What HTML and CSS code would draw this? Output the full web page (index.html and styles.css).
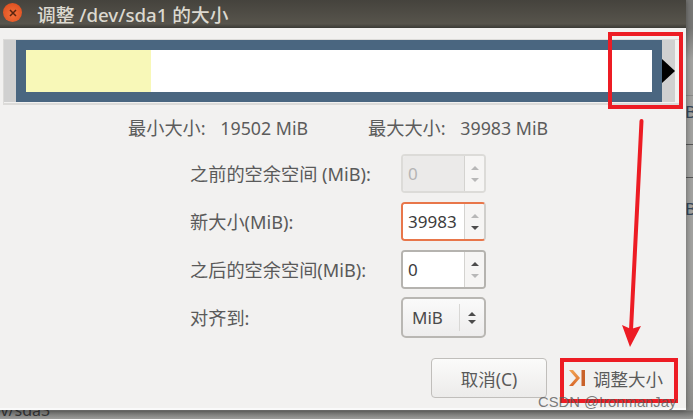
FILE: index.html
```html
<!DOCTYPE html>
<html lang="zh">
<head>
<meta charset="utf-8">
<title>调整 /dev/sda1 的大小</title>
<link rel="stylesheet" href="styles.css">
</head>
<body>
<div class="desktop">
  <div class="window">
    <header class="titlebar">
      <span class="close"><svg width="8" height="8" viewBox="0 0 8 8"><path d="M1 1l6 6M7 1l-6 6" stroke="#5a2410" stroke-width="1.5" fill="none"/></svg></span>
      <span class="title">调整 /dev/sda1 的大小</span>
    </header>
    <main class="content">
      <div class="graph">
        <div class="free-side"></div>
        <div class="partition"><div class="inner"><div class="used"></div></div></div>
        <div class="handle"><span class="tri"></span></div>
      </div>
      <div class="sizes">
        <span class="size">最小大小: <b class="num">19502 MiB</b></span>
        <span class="size">最大大小: <b class="num">39983 MiB</b></span>
      </div>
      <div class="form">
        <label>之前的空余空间 (MiB):</label>
        <div class="spin disabled"><span class="val">0</span><span class="btns"><i class="up"></i><i class="down"></i></span></div>
        <label>新大小(MiB):</label>
        <div class="spin focus"><span class="val">39983</span><span class="btns"><i class="up"></i><i class="down on"></i></span></div>
        <label>之后的空余空间(MiB):</label>
        <div class="spin"><span class="val">0</span><span class="btns"><i class="up on"></i><i class="down"></i></span></div>
        <label>对齐到:</label>
        <div class="combo"><span class="val">MiB</span><span class="arrows"><i class="up on"></i><i class="down on"></i></span></div>
      </div>
      <div class="actions">
        <button class="btn">取消(C)</button>
        <button class="btn primary"><svg width="17" height="18" viewBox="0 0 17 18"><defs><linearGradient id="g" x1="0" y1="0" x2="0" y2="1"><stop offset="0" stop-color="#f0a050"/><stop offset="1" stop-color="#d8682a"/></linearGradient></defs><path d="M0 1h4l7 8-7 8H0l7-8z" fill="url(#g)"/><rect x="12.5" y="1" width="3.5" height="16" fill="#c9622a"/></svg>调整大小</button>
      </div>
    </main>
  </div>
  <div class="behind behind-text">/dev/sda3</div>
  <div class="behind behind-b b1">B</div>
  <div class="behind behind-b b2">B</div>
  <div class="behind rule r1"></div>
  <div class="behind rule r2"></div>
  <div class="behind rule r3"></div>
  <div class="mark box-top"></div>
  <div class="mark box-bottom"></div>
  <svg class="arrow" width="693" height="419" viewBox="0 0 693 419"><path d="M641.5 121L631 330" stroke="#ed1c24" stroke-width="4" stroke-linecap="round" fill="none"/><path d="M622 325L631 329L641 326L630 347Z" fill="#ed1c24"/></svg>
  <div class="watermark">CSDN @IronmanJay</div>
</div>
</body>
</html>
```
FILE: styles.css
```css
* { box-sizing: border-box; }
html, body { margin: 0; padding: 0; }
body { width: 693px; height: 419px; overflow: hidden; background: #8f8f8b; font-family: "Noto Sans", "Noto Sans CJK SC", sans-serif; color: #555; }
.desktop { position: relative; isolation: isolate; width: 693px; height: 419px; background: linear-gradient(#777775 28px, #a2a2a0 60px, #a2a2a0 330px, #8e8e8c 410px, #6e6e6c 411px, #9a9a98); }
.window { width: 686px; height: 410px; display: flex; flex-direction: column; background: #f2f1f0; border-bottom: 2px solid #fafafa; box-shadow: 0 0 6px rgba(0,0,0,.4); }
.titlebar { height: 28px; flex: none; display: flex; align-items: center; padding-left: 3px; gap: 15px; background: linear-gradient(#45433d, #57544c 85%, #3b3a35); }
.close { width: 19px; height: 19px; margin-top: -3px; border-radius: 50%; background: radial-gradient(circle at 50% 60%, #f4703a, #d9481a); display: flex; align-items: center; justify-content: center; }
.title { font-size: 18.7px; font-weight: 500; color: #dcd9d0; margin-top: -2px; white-space: nowrap; }
.content { flex: 1; display: flex; flex-direction: column; padding: 11px 6px 0 3px; }
.graph { height: 66px; width: 677px; display: flex; border: 1px solid #dcdbd9; border-bottom-width: 2px; background: #f2f1f0; }
.free-side { width: 12px; height: 62px; background: #d0d0d0; }
.partition { width: 646px; height: 62px; padding: 10px; background: #4a6680; }
.inner { height: 42px; background: #fff; }
.used { width: 125px; height: 42px; background: #f8f8b8; }
.handle { width: 13px; height: 62px; background: #d0d0d0; display: flex; align-items: center; }
.tri { width: 0; height: 0; border-left: 13px solid #000; border-top: 12px solid transparent; border-bottom: 12px solid transparent; }
.sizes { display: flex; gap: 60px; margin: 12px 0 0 125px; font-size: 18.2px; line-height: 22px; color: #5c5c5c; white-space: nowrap; }
.size { width: 180px; }
.num { font-size: 17.8px; font-weight: 400; margin-left: 10px; }
.form { display: grid; grid-template-columns: 211px 85px; grid-auto-rows: 39px; row-gap: 9px; align-items: center; margin: 15px 0 0 187px; font-size: 18.2px; color: #5a5a5a; }
.form label { white-space: nowrap; margin-top: -1px; }
.spin { height: 39px; display: flex; border: 2px solid #b5b3af; border-radius: 4px; background: #fff; overflow: hidden; }
.spin .val { flex: 1; padding-left: 5px; line-height: 35px; font-size: 17px; color: #3c3c3c; background: #fff; }
.btns { width: 20px; flex: none; display: flex; flex-direction: column; align-items: center; justify-content: center; gap: 8px; background: #f6f5f4; border-left: 1px solid #d4d3d0; }
.spin.disabled { border-color: #dcdbd8; }
.spin.disabled .val { background: #ebeae9; color: #b5b5b5; }
.spin.focus { border-color: #e8764a; border-right-color: #d0cfcc; }
.up, .down { display: block; width: 0; height: 0; border-left: 4px solid transparent; border-right: 4px solid transparent; }
.up { border-bottom: 4px solid #b8b8b8; }
.down { border-top: 4px solid #b8b8b8; }
.up.on { border-bottom-color: #4c4c4c; }
.down.on { border-top-color: #4c4c4c; }
.combo { height: 41px; display: flex; align-items: center; border: 2px solid #b9b7b3; border-radius: 5px; background: linear-gradient(#fafafa, #eeeded); }
.combo .val { flex: 1; padding-left: 9px; font-size: 17px; color: #4a4a4a; height: 27px; line-height: 27px; border-right: 1px solid #d8d7d5; }
.arrows { width: 24px; flex: none; display: flex; flex-direction: column; align-items: center; gap: 4px; }
.actions { display: flex; gap: 13px; margin: 21px 0 0 428px; }
.btn { width: 116px; height: 40px; font: inherit; font-size: 17.5px; font-weight: 400; color: #5a5a5a; border: 1px solid #c0bebb; border-radius: 4px; background: linear-gradient(#fbfbfa, #ecebea); display: flex; align-items: center; justify-content: center; gap: 7px; padding: 0; }
.primary { border-color: transparent; background: #f2f1f0; justify-content: flex-start; padding-left: 8px; }
.behind { position: absolute; z-index: -1; }
.behind-text { left: -24px; top: 403px; font-size: 16px; line-height: 14px; color: #333; white-space: nowrap; }
.behind-b { left: 685px; font-size: 17px; line-height: 20px; color: #34465a; }
.b1 { top: 102px; }
.b2 { top: 199px; }
.rule { left: 686px; width: 7px; height: 1px; background: #555; }
.r1 { top: 95px; background: #8a8a88; }
.r2 { top: 144px; }
.r3 { top: 177px; }
.mark { position: absolute; border: 4px solid #ed1c24; }
.box-top { left: 608px; top: 32px; width: 75px; height: 77px; }
.box-bottom { left: 560px; top: 358px; width: 118px; height: 45px; }
.arrow { position: absolute; left: 0; top: 0; }
.watermark { position: absolute; left: 538px; top: 394px; font-family: "Liberation Sans", sans-serif; font-size: 14.8px; line-height: 16px; color: rgba(90,90,90,.8); white-space: nowrap; }
```
